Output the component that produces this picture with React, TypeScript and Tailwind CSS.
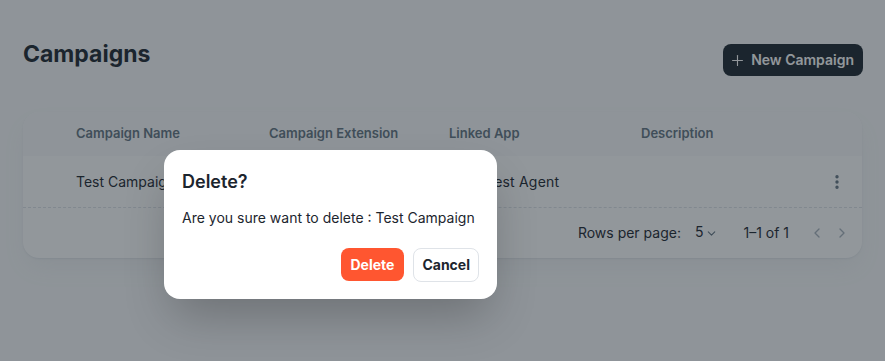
import { Plus, ChevronDown, ChevronLeft, ChevronRight, EllipsisVertical, Bot } from 'lucide-react';

const columns = ['Campaign Name', 'Campaign Extension', 'Linked App', 'Description'];

function CampaignTable() {
  return (
    <div className="mt-[36px] rounded-2xl bg-white shadow-[0_1px_2px_rgba(145,158,171,0.16),0_12px_24px_-4px_rgba(145,158,171,0.1)] overflow-hidden">
      <div className="grid grid-cols-[53px_193px_180px_192px_1fr_50px] h-[44px] items-center bg-[#f9fafb] text-[13px] font-semibold text-[#637381]">
        <div />
        {columns.map(c => (
          <div key={c}>{c}</div>
        ))}
        <div />
      </div>
      <div className="grid grid-cols-[53px_193px_180px_192px_1fr_50px] h-[52px] items-center border-b border-dashed border-[#dfe3e8] text-sm text-[#1c252e]">
        <div />
        <div>Test Campaign</div>
        <div>test-ext</div>
        <div className="flex items-center gap-2">
          <Bot className="w-6 h-6 text-[#637381]" />
          <span className="ml-[5px] tracking-[0.2px]">Test Agent</span>
        </div>
        <div />
        <div className="flex justify-center text-[#637381]">
          <EllipsisVertical className="w-[18px] h-[18px]" strokeWidth={2.5} />
        </div>
      </div>
      <div className="flex h-[50px] items-center justify-end pr-[12px] text-sm text-[#1c252e]">
        <span>Rows per page:</span>
        <span className="ml-[14px] flex items-center">
          <span className="-mt-[3px]">5</span>
          <ChevronDown className="w-[13px] h-[13px] ml-[2px] text-[#637381]" />
        </span>
        <span className="ml-[25px]">1–1 of 1</span>
        <span className="ml-[20px] flex items-center gap-[9px] text-[#a8b2bd]">
          <ChevronLeft className="w-4 h-4" />
          <ChevronRight className="w-4 h-4" />
        </span>
      </div>
    </div>
  );
}

export default function App() {
  return (
    <div className="relative h-[361px] overflow-hidden bg-[#f9fafb] font-['Inter',sans-serif]">
      <div className="px-[23px] pt-[40px]">
        <div className="flex items-start justify-between">
          <h1 className="text-[23px] leading-[28px] font-bold text-[#1c252e]">Campaigns</h1>
          <button className="mt-[4px] mr-[-1px] flex h-[32px] items-center gap-[5px] rounded-lg bg-[#1c252e] pl-[6px] pr-[9px] text-sm font-semibold text-white">
            <Plus className="w-[17px] h-[17px]" strokeWidth={1.6} />
            New Campaign
          </button>
        </div>
        <CampaignTable />
      </div>

      <div className="absolute inset-0 bg-[#1c252e]/[0.48]" />

      <div className="absolute left-[164px] top-[150px] w-[333px] rounded-2xl bg-white px-[18px] pt-[20px] pb-[17px] shadow-[0_24px_48px_-8px_rgba(0,0,0,0.24)]">
        <h2 className="text-lg leading-6 font-semibold text-[#1c252e]">Delete?</h2>
        <p className="mt-[14px] text-sm leading-5 text-[#1c252e]">Are you sure want to delete : Test Campaign</p>
        <div className="mt-[20px] flex justify-end gap-[9px]">
          <button className="h-[33px] rounded-lg bg-[#ff5630] px-[10px] text-sm font-bold text-white">Delete</button>
          <button className="h-[34px] rounded-lg border border-[#dfe3e8] bg-white px-[8px] text-sm font-bold text-[#1c252e]">Cancel</button>
        </div>
      </div>
    </div>
  );
}
